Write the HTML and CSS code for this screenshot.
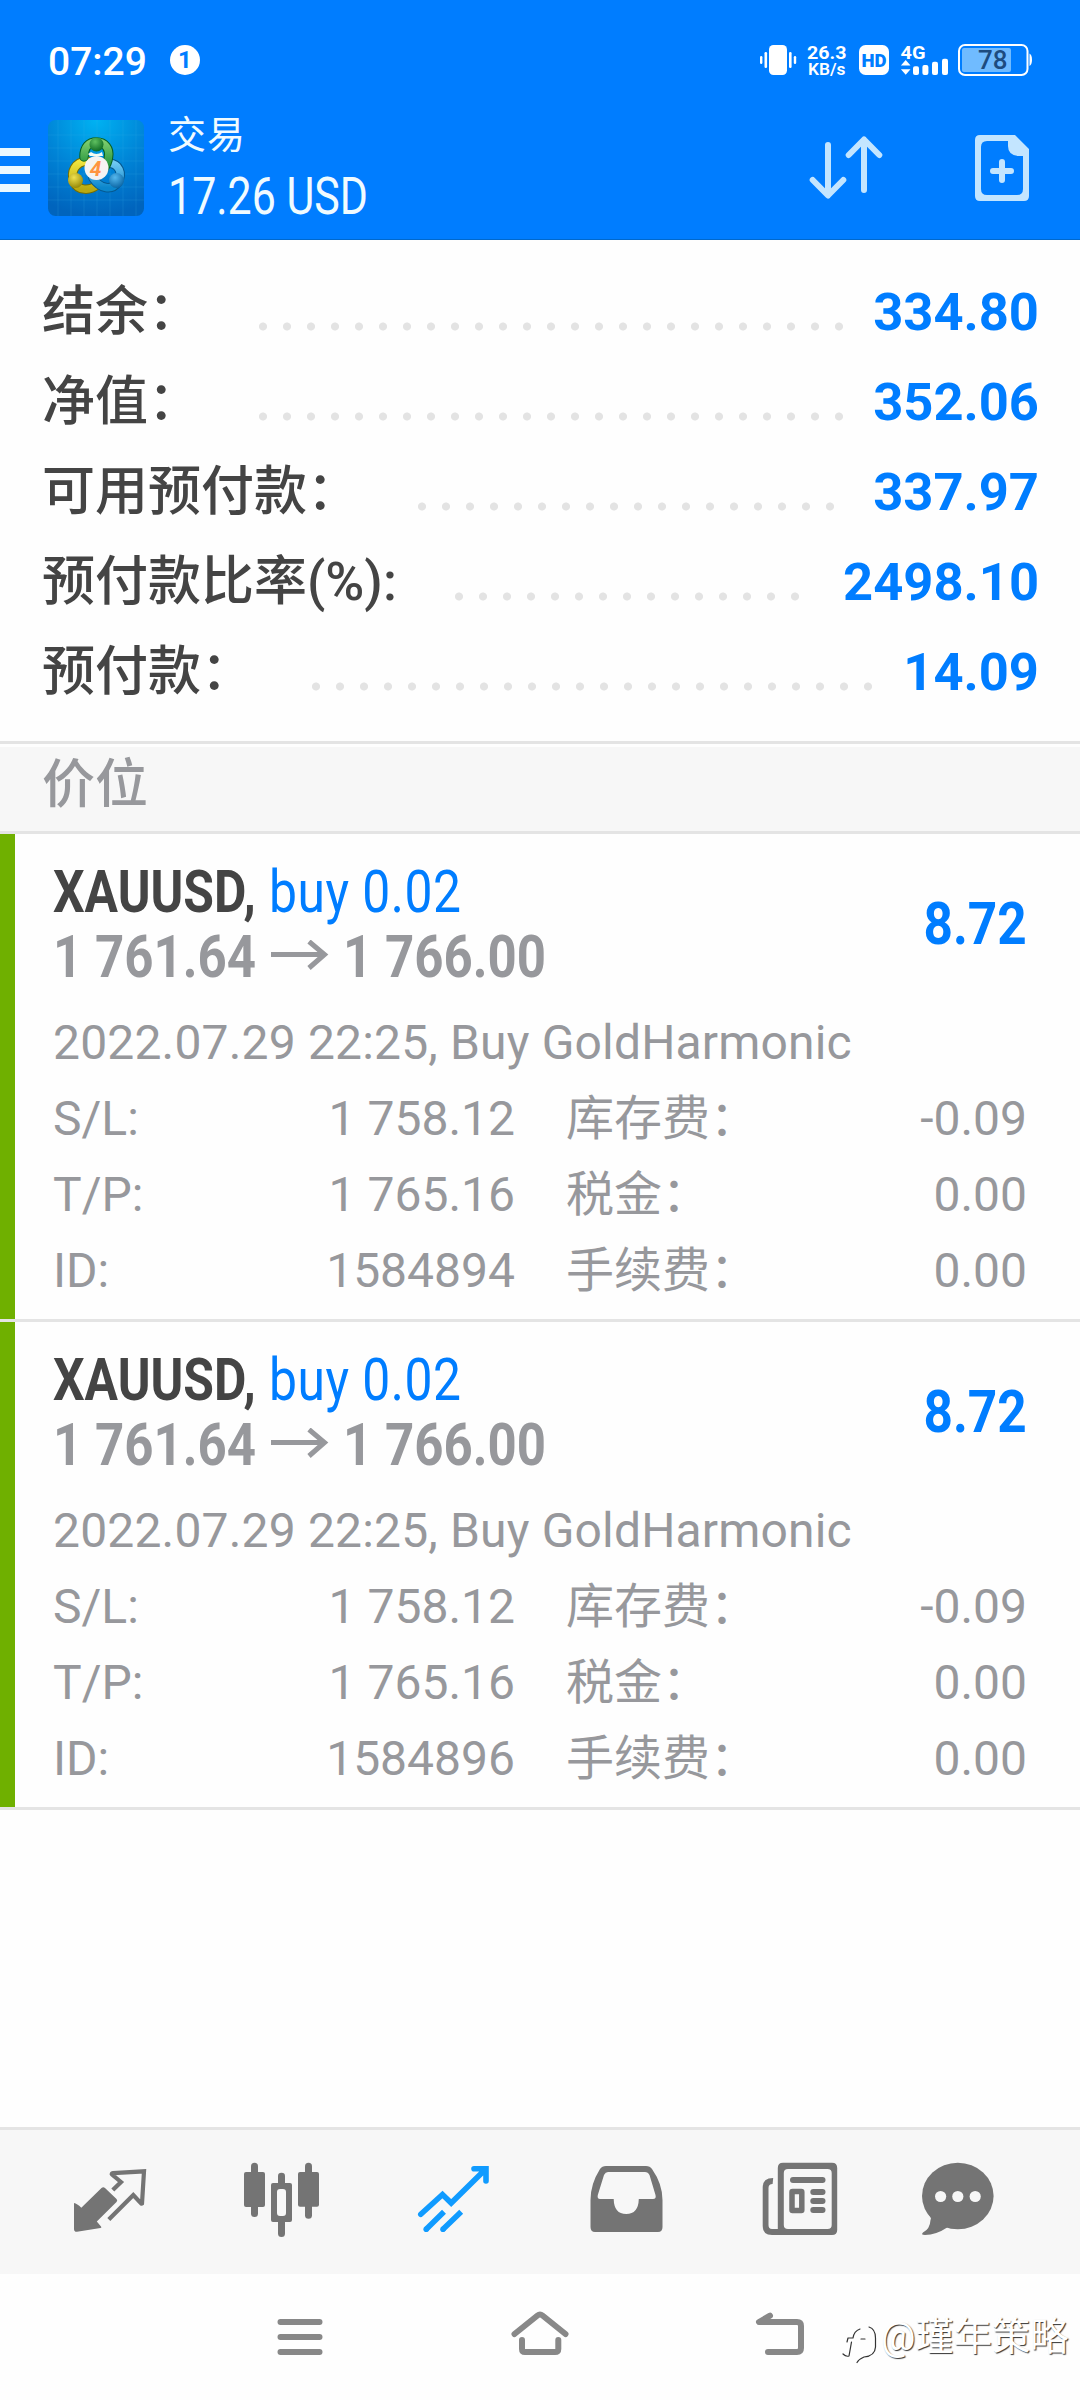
FILE: index.html
```html
<!DOCTYPE html>
<html lang="zh-CN">
<head>
<meta charset="utf-8">
<title>交易</title>
<link rel="stylesheet" href="styles.css">
</head>
<body>
<header class="header">
  <div class="status">
    <span class="clock">07:29</span>
    <span class="notice">1</span>
    <svg class="status-icons" width="280" height="40" viewBox="757 40 280 40">
      <g fill="#fff">
        <rect x="769" y="45" width="18" height="30" rx="4.5"/>
        <rect x="764.5" y="52" width="2.6" height="16" rx="1.2"/>
        <rect x="760" y="56" width="2.4" height="8" rx="1.2"/>
        <rect x="789" y="52" width="2.6" height="16" rx="1.2"/>
        <rect x="793.8" y="56" width="2.4" height="8" rx="1.2"/>
        <text x="807" y="59" font-size="18.5" font-weight="700" textLength="39.5" lengthAdjust="spacingAndGlyphs">26.3</text>
        <text x="808" y="74.8" font-size="16.5" font-weight="600" textLength="37.5" lengthAdjust="spacingAndGlyphs">KB/s</text>
        <rect x="859" y="45" width="30" height="30" rx="6.5"/>
        <text x="900.5" y="59" font-size="18.5" font-weight="700" textLength="25" lengthAdjust="spacingAndGlyphs">4G</text>
        <path d="M905.7 60l4.8 5.5h-9.6zM905.7 74.8l4.8-5.6h-9.6z"/>
        <rect x="913" y="66.3" width="6" height="8.7" rx="2"/>
        <rect x="922.4" y="65" width="6" height="10" rx="2"/>
        <rect x="932" y="61.7" width="6" height="13.3" rx="2"/>
        <rect x="942" y="58.7" width="6" height="16.3" rx="2"/>
        <path d="M1029.500 53.500q2.500 1.500 2.500 6.300t-2.500 6.300z"/>
      </g>
      <text x="861.5" y="67" font-size="19" font-weight="900" fill="#007dff" textLength="25" lengthAdjust="spacingAndGlyphs">HD</text>
      <rect x="959" y="45" width="68.5" height="30" rx="6" fill="none" stroke="#fff" stroke-width="2"/>
      <rect x="962" y="48" width="49" height="24" rx="2" fill="#70bbff"/>
      <text x="978" y="69" font-size="25" font-weight="500" fill="#1d4c80" textLength="29.5" lengthAdjust="spacingAndGlyphs">78</text>
    </svg>
  </div>
  <div class="toolbar">
    <div class="menu"><i></i><i></i><i></i></div>
    <svg class="app-icon" width="96" height="96" viewBox="0 0 96 96">
      <defs>
        <radialGradient id="bg" cx=".5" cy="0" r="1"><stop offset="0" stop-color="#00b2f2"/><stop offset=".55" stop-color="#0083d6"/><stop offset="1" stop-color="#0064bd"/></radialGradient>
        <linearGradient id="gr" x2="0" y2="1"><stop offset="0" stop-color="#7ccb6c"/><stop offset="1" stop-color="#128a35"/></linearGradient>
        <linearGradient id="ye" x2="0" y2="1"><stop offset="0" stop-color="#f3e63e"/><stop offset="1" stop-color="#b9a910"/></linearGradient>
        <linearGradient id="bl" x2="0" y2="1"><stop offset="0" stop-color="#6fc8f2"/><stop offset="1" stop-color="#0b86cc"/></linearGradient>
        <radialGradient id="g2" cx=".4" cy=".3" r=".8"><stop offset="0" stop-color="#5fc060"/><stop offset="1" stop-color="#04601c"/></radialGradient>
        <radialGradient id="y2" cx=".4" cy=".3" r=".8"><stop offset="0" stop-color="#f0e250"/><stop offset="1" stop-color="#8b7e00"/></radialGradient>
        <radialGradient id="b2" cx=".4" cy=".3" r=".8"><stop offset="0" stop-color="#55b8ee"/><stop offset="1" stop-color="#025c9c"/></radialGradient>
      </defs>
      <rect width="96" height="96" rx="7.5" fill="url(#bg)"/>
      <path d="M10 0v96M23 0v96M36 0v96M49 0v96M62 0v96M75 0v96M88 0v96M0 15h96M0 28h96M0 41h96M0 54h96M0 67h96M0 80h96" stroke="#38b4ee" stroke-opacity=".18" stroke-width="1"/>
      <g fill="none" stroke-linecap="round">
        <path d="M39 41C27 42 22 52 26 62C30 71 42 71 49 65" stroke="#766e00" stroke-width="9.500"/>
        <path d="M39 41C27 42 22 52 26 62C30 71 42 71 49 65" stroke="url(#ye)" stroke-width="7.500"/>
        <path d="M61 43C71 44 75 53 70 62C64 71 52 69 45 58" stroke="#05588f" stroke-width="9.500"/>
        <path d="M61 43C71 44 75 53 70 62C64 71 52 69 45 58" stroke="url(#bl)" stroke-width="7.500"/>
        <path d="M36 37C36 27 41 22 48.500 22C57 22 62 29 60.500 37C60 43 57 47 55 50" stroke="#066024" stroke-width="9.500"/>
        <path d="M36 37C36 27 41 22 48.500 22C57 22 62 29 60.500 37C60 43 57 47 55 50" stroke="url(#gr)" stroke-width="7.500"/>
      </g>
      <path d="M40 34L43 32Q48.500 36 54 32L55 36H42Z" fill="#f4fbf2"/>
      <circle cx="48.500" cy="24.500" r="7" fill="url(#g2)"/>
      <circle cx="27.500" cy="60.500" r="7.500" fill="url(#y2)"/>
      <circle cx="68.500" cy="60.500" r="7.500" fill="url(#b2)"/>
      <circle cx="48.500" cy="48" r="12" fill="#f5f3f2"/>
      <text x="47.500" y="55.500" text-anchor="middle" font-size="21" font-weight="700" font-style="italic" fill="#ff9440">4</text>
    </svg>
    <div class="title">
      <div class="title-name">交易</div>
      <div class="title-sum">17.26 USD</div>
    </div>
    <svg class="sort" width="74" height="72" viewBox="809 132 74 72" fill="none" stroke="#c3e5ff" stroke-width="6" stroke-linecap="round" stroke-linejoin="round">
      <path d="M828 145V195M812.700 180L828 195.500L843.300 180M864 190V140M848.700 155L864 139.500L879.300 155"/>
    </svg>
    <svg class="add" width="54" height="66" viewBox="975 135 54 66">
      <path fill="#c3e5ff" fill-rule="evenodd" d="M980 135H1015L1029 149V196Q1029 201 1024 201H980Q975 201 975 196V140Q975 135 980 135ZM987 141Q981 141 981 147V189Q981 195 987 195H1017Q1023 195 1023 189V156H1018Q1008 155 1008 146V141Z"/>
      <path d="M993 171h18M1002 162v18" stroke="#c3e5ff" stroke-width="6" stroke-linecap="round"/>
    </svg>
  </div>
</header>

<section class="summary">
  <div class="sum-row"><span>结余：</span><i class="dots" style="width:600px"></i><b>334.80</b></div>
  <div class="sum-row"><span>净值：</span><i class="dots" style="width:600px"></i><b>352.06</b></div>
  <div class="sum-row"><span>可用预付款：</span><i class="dots" style="width:432px"></i><b>337.97</b></div>
  <div class="sum-row"><span>预付款比率(%):</span><i class="dots" style="width:360px"></i><b>2498.10</b></div>
  <div class="sum-row"><span>预付款：</span><i class="dots" style="width:576px"></i><b>14.09</b></div>
</section>

<h2 class="section">价位</h2>

<article class="position">
  <div class="pos-head">
    <div>
      <div class="pos-name"><b>XAUUSD,</b> <span>buy 0.02</span></div>
      <div class="pos-price"><span>1 761.64</span>
        <svg width="58" height="34" viewBox="0 0 58 34" fill="none" stroke="#97989c" stroke-width="5"><path d="M0 14.500H54M38 1.500L53.500 14.500L38 28"/></svg>
        <span>1 766.00</span></div>
    </div>
    <div class="profit">8.72</div>
  </div>
  <div class="pos-date">2022.07.29 22:25, Buy GoldHarmonic</div>
  <dl class="details">
    <div><dt>S/L:</dt><dd>1 758.12</dd></div><div><dt>库存费：</dt><dd>-0.09</dd></div>
    <div><dt>T/P:</dt><dd>1 765.16</dd></div><div><dt>税金：</dt><dd>0.00</dd></div>
    <div><dt>ID:</dt><dd>1584894</dd></div><div><dt>手续费：</dt><dd>0.00</dd></div>
  </dl>
</article>
<article class="position">
  <div class="pos-head">
    <div>
      <div class="pos-name"><b>XAUUSD,</b> <span>buy 0.02</span></div>
      <div class="pos-price"><span>1 761.64</span>
        <svg width="58" height="34" viewBox="0 0 58 34" fill="none" stroke="#97989c" stroke-width="5"><path d="M0 14.500H54M38 1.500L53.500 14.500L38 28"/></svg>
        <span>1 766.00</span></div>
    </div>
    <div class="profit">8.72</div>
  </div>
  <div class="pos-date">2022.07.29 22:25, Buy GoldHarmonic</div>
  <dl class="details">
    <div><dt>S/L:</dt><dd>1 758.12</dd></div><div><dt>库存费：</dt><dd>-0.09</dd></div>
    <div><dt>T/P:</dt><dd>1 765.16</dd></div><div><dt>税金：</dt><dd>0.00</dd></div>
    <div><dt>ID:</dt><dd>1584896</dd></div><div><dt>手续费：</dt><dd>0.00</dd></div>
  </dl>
</article>

<nav class="tabs">
  <svg viewBox="24 2130 172 144">
    <path d="M74 2203Q77 2203.500 81.300 2207.700L101.500 2188Q103.300 2186.300 105 2188L116.500 2199Q118 2200.300 116.500 2202L96.800 2221.500L101 2226.500Q102 2227.500 100.500 2228L77 2231.800Q74 2232 74 2229Z" fill="#747474"/>
    <path d="M112.800 2190L121 2182L112 2174.500Q111 2173.500 113 2173.200L144 2171.300L142 2203.500Q141.500 2204 141 2203.200L133.300 2195L108.800 2219.600" fill="none" stroke="#747474" stroke-width="4.200" stroke-linejoin="miter"/>
  </svg>
  <svg viewBox="196 2130 172 144" fill="#747474">
    <rect x="244" y="2172" width="21" height="35" rx="2"/><rect x="251" y="2162.700" width="7" height="54.300" rx="3.500"/>
    <path fill-rule="evenodd" d="M273 2183H290Q292 2183 292 2185V2220Q292 2222 290 2222H273Q271 2222 271 2220V2185Q271 2183 273 2183ZM280 2189Q277 2189 277 2192V2213Q277 2216 280 2216H283Q286 2216 286 2213V2192Q286 2189 283 2189Z"/>
    <path d="M278 2184V2176Q278 2172.700 281.500 2172.700T285 2176V2184ZM278 2221V2233.500Q278 2237 281.500 2237T285 2233.500V2221Z"/>
    <rect x="298" y="2172" width="21" height="34.700" rx="2"/><rect x="305" y="2162.700" width="7" height="56" rx="3.500"/>
  </svg>
  <svg viewBox="368 2130 172 144" fill="none" stroke="#109bff" stroke-width="5.600" stroke-linecap="round">
    <path d="M420.800 2214.300L442.500 2194.500L451.200 2203L485.500 2169.300M474 2168.800H486V2181"/>
    <circle cx="426.200" cy="2229.200" r="2.800" fill="#109bff" stroke="none"/><circle cx="443" cy="2229.200" r="2.800" fill="#109bff" stroke="none"/>
    <path stroke-linecap="butt" d="M426.200 2229.200L444 2211.700M443 2229.200L461.200 2211.700"/>
  </svg>
  <svg viewBox="540 2130 172 144" fill="#747474">
    <path fill-rule="evenodd" d="M606 2166H646Q650 2166 652 2169Q662.500 2184 662.500 2200V2227Q662.500 2232 658 2232H595Q590.500 2232 590.500 2227V2200Q590.500 2184 600 2169Q602 2166 606 2166ZM608 2172Q605.500 2172 604 2175L597.800 2195Q597 2199 600 2199H613.700Q614 2214 626.200 2214T638.800 2199H653Q656.500 2199 655.500 2195L649.500 2175Q648 2172 645 2172Z"/>
  </svg>
  <svg viewBox="712 2130 172 144" fill="#747474">
    <path fill-rule="evenodd" d="M783 2162.700H832Q837.200 2162.700 837.200 2168V2230Q837.200 2235 832 2235H772Q762.700 2235 762.700 2226V2187Q762.700 2178 773.200 2178L772.600 2184Q768.500 2184 768.500 2188V2225Q768.500 2229 772 2229H777.800V2168Q777.800 2162.700 783 2162.700ZM788 2169Q783.800 2169 783.800 2173V2225Q783.800 2229 788 2229H827.500Q831.700 2229 831.700 2225V2173Q831.700 2169 827.500 2169Z"/>
    <rect x="790" y="2177" width="35.500" height="6" rx="3"/>
    <rect x="792" y="2191.500" width="9.800" height="19" rx=".5" fill="none" stroke="#747474" stroke-width="5.500" stroke-linejoin="round"/>
    <path d="M813.300 2192h9.200M813.300 2201h9.200M813.300 2210h9.200" stroke="#747474" stroke-width="6" stroke-linecap="round"/>
  </svg>
  <svg viewBox="884 2130 172 144" fill="#747474">
    <ellipse cx="957.800" cy="2196" rx="35.800" ry="33.200"/>
    <path d="M928 2213Q932 2218 930.500 2220Q930 2229 923 2232.500Q920.500 2235 925 2235Q936 2235 948 2227Z"/>
    <g fill="#f7f7f7"><circle cx="940.600" cy="2196.500" r="5.600"/><circle cx="957.800" cy="2196.500" r="5.600"/><circle cx="975.200" cy="2196.500" r="5.600"/></g>
  </svg>
</nav>

<footer class="sysnav">
  <svg width="1080" height="126" viewBox="0 2274 1080 126" fill="none" stroke="#888" stroke-width="6" stroke-linecap="round" stroke-linejoin="round">
    <path d="M280.500 2322h39M280.500 2337h39M280.500 2352h39"/>
    <path d="M514.500 2334L537.500 2315.500Q540 2313.500 542.500 2315.500L565.500 2334M522 2340V2349Q522 2352 525 2352H555Q558.300 2352 558.300 2349V2340"/>
    <path d="M770 2315.700L759 2322H797Q801 2322 801 2326V2348Q801 2352 797 2352H768"/>
    <g stroke-width="1.200" stroke="#333">
      <path d="M869 2327Q875.500 2329 875.500 2338V2347Q875 2356 864 2357Q859 2359 857 2362.500"/>
      <path d="M860 2329Q854 2331 853 2338H848L847 2342M851.500 2342L849 2356Q846 2357 843 2354M861 2339H865"/>
    </g>
  </svg>
  <span class="mark">@瑾年策略</span>
</footer>
</body>
</html>
```
FILE: styles.css
```css
* { box-sizing: border-box; margin: 0; }
body {
  width: 1080px; height: 2400px; overflow: hidden;
  display: flex; flex-direction: column;
  background: #fefefe; color: #444;
  font-family: Roboto, "Noto Sans CJK SC", sans-serif;
}
svg { display: block; flex: none; }

.header { height: 240px; background: #007dff; border-bottom: 1px solid #0068cc; color: #f0fbff; }
.status { height: 80px; padding-top: 40px; padding-left: 48px; display: flex; align-items: center; color: #fff; }
.clock { width: 122px; font-size: 39px; font-weight: 500; line-height: 40px; padding-top: 4px; }
.notice { width: 30px; height: 30px; border-radius: 50%; background: #fff; color: #007dff; text-align: center; font-size: 24px; font-weight: 700; line-height: 31px; }
.status-icons { margin-left: 557px; }

.toolbar { display: flex; align-items: flex-start; padding-top: 32px; }
.menu { width: 48px; padding-top: 36px; display: flex; flex-direction: column; gap: 10px; }
.menu i { width: 30px; height: 8px; background: #eaf8ff; }
.app-icon { margin-top: 8px; }
.title { width: 665px; padding-left: 24px; }
.title-name { font-size: 38px; line-height: 46px; letter-spacing: 1px; }
.title-sum { width: 300px; margin-top: 9px; font-size: 51px; line-height: 60px; white-space: nowrap; transform: scaleX(.842); transform-origin: left; }
.sort { margin-top: 20px; }
.add { margin-left: 92px; margin-top: 23px; }

.summary { height: 504px; padding: 27px 41px 0 42px; border-bottom: 3px solid #e4e4e4; }
.sum-row { display: flex; height: 90px; line-height: 90px; font-size: 53px; font-weight: 500; white-space: nowrap; }
.sum-row span { margin-right: 50px; }
.sum-row b { margin-left: auto; font-size: 52.500px; font-weight: 700; color: #007dff; }
.dots { height: 9px; margin-top: 55px; background: radial-gradient(circle, #e3e3e3 3.600px, transparent 4.400px) 0 0 / 24px 9px repeat-x; }

.section { height: 87px; margin-top: 3px; padding-left: 42px; background: #f7f7f7; border-bottom: 3px solid #e4e4e4; color: #97989c; font-size: 53px; font-weight: 500; line-height: 76px; }

.position { height: 488px; padding: 25px 53px 0; border-bottom: 3px solid #e4e4e4; background: linear-gradient(#6fb000, #6fb000) 0 0 / 15px 100% no-repeat; color: #97989c; }
.pos-head { display: flex; justify-content: space-between; font-size: 60px; line-height: 65px; white-space: nowrap; }
.pos-name { color: #444; transform: scaleX(.83); transform-origin: left; }
.pos-name span { margin-left: 1px; letter-spacing: .6px; color: #007dff; }
.pos-price { display: flex; align-items: center; gap: 17px; font-weight: 700; }
.pos-price span { width: 201px; transform: scaleX(.85); transform-origin: left; }
.pos-price svg + span { margin-left: -3px; }
.profit { line-height: 130px; font-weight: 700; color: #007dff; transform: scaleX(.855); transform-origin: right; }
.pos-date { margin-top: 15px; font-size: 48px; line-height: 77px; height: 76px; letter-spacing: .17px; white-space: nowrap; }
.details { display: grid; grid-template-columns: 462px 461px; column-gap: 51px; font-size: 48px; line-height: 77px; }
.details div { display: flex; justify-content: space-between; height: 76px; }

.tabs { margin-top: auto; height: 147px; padding: 0 24px; display: flex; background: #f7f7f7; border-top: 3px solid #e4e4e4; }
.tabs svg { width: 172px; height: 144px; }
.sysnav { position: relative; height: 126px; }
.mark { position: absolute; left: 881px; top: 37px; font-size: 38.300px; line-height: 52px; color: #fff; text-shadow: 1px 1px 1px #333; white-space: nowrap; }
```
